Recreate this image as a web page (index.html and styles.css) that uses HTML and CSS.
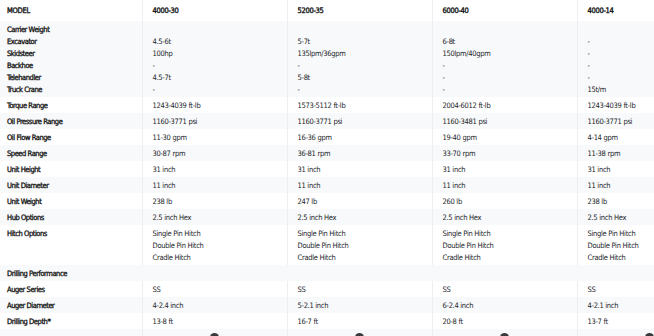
FILE: index.html
```html
<!DOCTYPE html>
<html lang="en">

<head>
    <meta charset="UTF-8">
    <meta name="viewport" content="width=device-width, initial-scale=1.0">
    <title>Specifications</title>

    <link rel="stylesheet" href="styles.css">
</head>

<body>
    <main class="spec-wrap">
        <table class="spec-table">
            <thead>
                <tr>
                    <th>MODEL</th>
                    <th>4000-30</th>
                    <th>5200-35</th>
                    <th>6000-40</th>
                    <th>4000-14</th>
                </tr>
            </thead>
            <tbody>
                <tr>
                    <td class="label"><span class="group">Carrier Weight</span><br>Excavator<br>Skidsteer<br>Backhoe<br>Telehandler<br>Truck Crane</td>
                    <td><br>4.5-6t<br>100hp<br>-<br>4.5-7t<br>-</td>
                    <td><br>5-7t<br>135lpm/36gpm<br>-<br>5-8t<br>-</td>
                    <td><br>6-8t<br>150lpm/40gpm<br>-<br>-<br>-</td>
                    <td><br>-<br>-<br>-<br>-<br>15t/m</td>
                </tr>
                <tr>
                    <td class="label">Torque Range</td>
                    <td>1243-4039 ft-lb</td>
                    <td>1573-5112 ft-lb</td>
                    <td>2004-6012 ft-lb</td>
                    <td>1243-4039 ft-lb</td>
                </tr>
                <tr>
                    <td class="label">Oil Pressure Range</td>
                    <td>1160-3771 psi</td>
                    <td>1160-3771 psi</td>
                    <td>1160-3481 psi</td>
                    <td>1160-3771 psi</td>
                </tr>
                <tr>
                    <td class="label">Oil Flow Range</td>
                    <td>11-30 gpm</td>
                    <td>16-36 gpm</td>
                    <td>19-40 gpm</td>
                    <td>4-14 gpm</td>
                </tr>
                <tr>
                    <td class="label">Speed Range</td>
                    <td>30-87 rpm</td>
                    <td>36-81 rpm</td>
                    <td>33-70 rpm</td>
                    <td>11-38 rpm</td>
                </tr>
                <tr>
                    <td class="label">Unit Height</td>
                    <td>31 inch</td>
                    <td>31 inch</td>
                    <td>31 inch</td>
                    <td>31 inch</td>
                </tr>
                <tr>
                    <td class="label">Unit Diameter</td>
                    <td>11 inch</td>
                    <td>11 inch</td>
                    <td>11 inch</td>
                    <td>11 inch</td>
                </tr>
                <tr>
                    <td class="label">Unit Weight</td>
                    <td>238 lb</td>
                    <td>247 lb</td>
                    <td>260 lb</td>
                    <td>238 lb</td>
                </tr>
                <tr>
                    <td class="label">Hub Options</td>
                    <td>2.5 inch Hex</td>
                    <td>2.5 inch Hex</td>
                    <td>2.5 inch Hex</td>
                    <td>2.5 inch Hex</td>
                </tr>
                <tr>
                    <td class="label">Hitch Options</td>
                    <td>Single Pin Hitch<br>Double Pin Hitch<br>Cradle Hitch</td>
                    <td>Single Pin Hitch<br>Double Pin Hitch<br>Cradle Hitch</td>
                    <td>Single Pin Hitch<br>Double Pin Hitch<br>Cradle Hitch</td>
                    <td>Single Pin Hitch<br>Double Pin Hitch<br>Cradle Hitch</td>
                </tr>
                <tr class="section">
                    <td colspan="5">Drilling Performance</td>
                </tr>
                <tr>
                    <td class="label">Auger Series</td>
                    <td>SS</td>
                    <td>SS</td>
                    <td>SS</td>
                    <td>SS</td>
                </tr>
                <tr>
                    <td class="label">Auger Diameter</td>
                    <td>4-2.4 inch</td>
                    <td>5-2.1 inch</td>
                    <td>6-2.4 inch</td>
                    <td>4-2.1 inch</td>
                </tr>
                <tr>
                    <td class="label">Drilling Depth*</td>
                    <td>13-8 ft</td>
                    <td>16-7 ft</td>
                    <td>20-8 ft</td>
                    <td>13-7 ft</td>
                </tr>
                <tr class="icons">
                    <td class="label"></td>
                    <td><span class="dot"></span></td>
                    <td><span class="dot"></span></td>
                    <td><span class="dot"></span></td>
                    <td><span class="dot"></span></td>
                </tr>
            </tbody>
        </table>
    </main>
</body>

</html>
```

FILE: styles.css
```css
html,
body {
    padding: 0;
    margin: 0;
}

* {
    box-sizing: border-box;
}

body {
    background-color: white;
    color: #22252a;
    font-family: "DejaVu Sans Condensed", "DejaVu Sans", sans-serif;
    font-size: 7.5px;
    overflow: hidden;
}

.spec-wrap {
    width: 100%;
    overflow: hidden;
}

.spec-table {
    width: 722px;
    border-collapse: collapse;
    table-layout: fixed;
    letter-spacing: -0.3px;
}

.spec-table th,
.spec-table td {
    width: 145px;
    padding: 3px 10px 1px;
    line-height: 12px;
    text-align: left;
    vertical-align: top;
    border-left: 1px solid #eceef1;
}

.spec-table th:first-child,
.spec-table td:first-child {
    width: 142px;
    padding-left: 7px;
    border-left: none;
}

.spec-table th {
    padding-top: 5px;
    padding-bottom: 4px;
    font-weight: normal;
    color: #111;
    -webkit-text-stroke: 0.35px #111;
}

.spec-table tbody tr:nth-child(odd) {
    background-color: #f8f9fa;
}

.label,
.section td {
    color: #111;
    letter-spacing: -0.45px;
    -webkit-text-stroke: 0.3px #111;
}

.section td {
    border-left: none;
}

.icons td {
    height: 16px;
    text-align: center;
    padding-top: 4px;
}

.dot {
    display: inline-block;
    width: 9px;
    height: 9px;
    border-radius: 50%;
    background-color: #3a3a3a;
}
```
